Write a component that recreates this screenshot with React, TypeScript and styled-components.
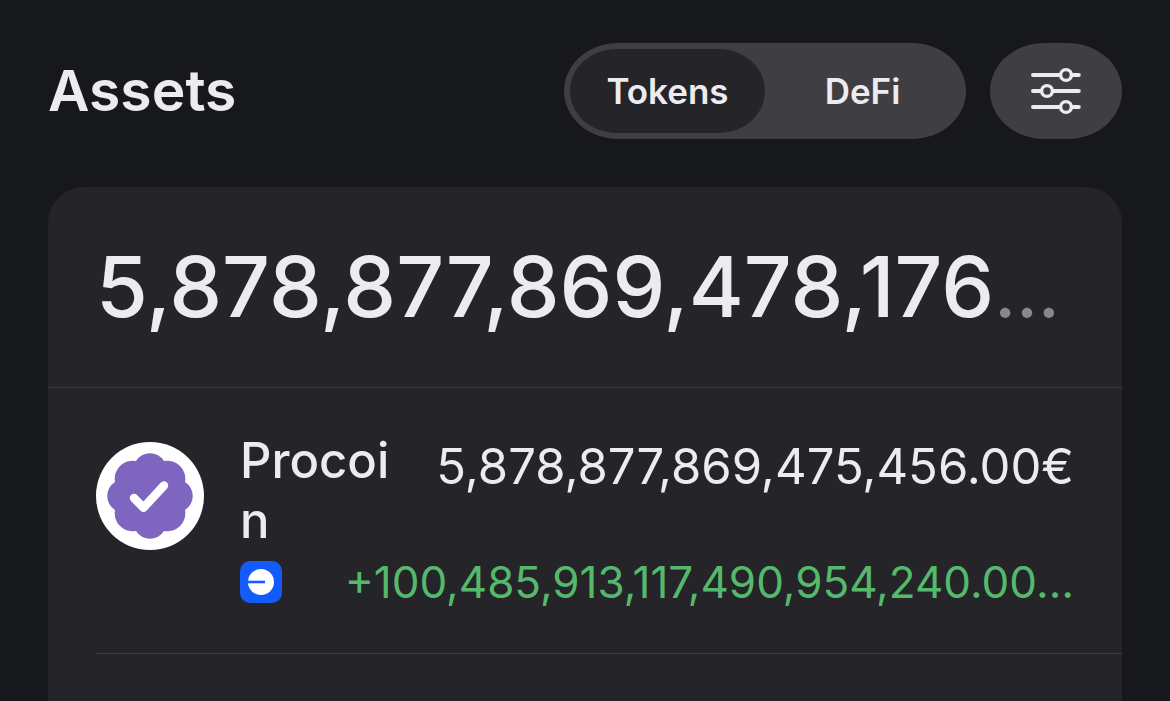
import React, { useState } from "react";
import styled, { createGlobalStyle } from "styled-components";

const color = {
  page: "#17181c",
  card: "#252429",
  control: "#3f3e43",
  line: "#3d3c41",
  text: "#ecebef",
  muted: "#87878c",
  gain: "#55b96c",
  verified: "#7e65c0",
  chain: "#135bfa",
};

const GlobalStyle = createGlobalStyle`
  *, *::before, *::after { box-sizing: border-box; }
  body {
    margin: 0;
    background: ${color.page};
    color: ${color.text};
    font-family: Inter, "Liberation Sans", sans-serif;
  }
  h1, p, ul { margin: 0; padding: 0; }
`;

const Page = styled.main`
  display: flex;
  flex-direction: column;
  gap: 48px;
  min-height: 100vh;
  padding: 43px 48px 0;
`;

const Header = styled.header`
  display: flex;
  align-items: center;
  gap: 24px;
`;

const Title = styled.h1`
  flex: 1;
  font-size: 57px;
  font-weight: 600;
  line-height: 72px;
`;

const Segments = styled.div`
  display: flex;
  padding: 6px;
  border-radius: 54px / 48px;
  background: ${color.control};
`;

const Segment = styled.button<{ $active: boolean }>`
  width: 195px;
  height: 84px;
  padding: 0;
  border: 0;
  border-radius: 46px / 42px;
  background: ${({ $active }) => ($active ? color.card : "transparent")};
  color: inherit;
  font: 600 35px/48px Inter, "Liberation Sans", sans-serif;
  cursor: pointer;
`;

const FilterButton = styled.button`
  display: flex;
  align-items: center;
  justify-content: center;
  width: 132px;
  height: 96px;
  padding: 0;
  border: 0;
  border-radius: 54px / 48px;
  background: ${color.control};
  color: inherit;
  cursor: pointer;
`;

const Card = styled.section`
  flex: 1;
  overflow: hidden;
  border-radius: 36px 36px 0 0;
  background: ${color.card};
`;

const Total = styled.p`
  padding: 50px 48px;
  border-bottom: 1px solid ${color.line};
  font-size: 84px;
  font-weight: 500;
  line-height: 100px;
  white-space: nowrap;
`;

const Rest = styled.span`
  color: ${color.muted};
  font-size: 72px;
  line-height: 72px;
`;

const TokenList = styled.ul`
  list-style: none;
  padding-left: 48px;
`;

const TokenRow = styled.li`
  display: flex;
  align-items: flex-start;
  gap: 36px;
  padding: 43px 48px 44px 0;
  border-bottom: 1px solid ${color.line};
`;

const TokenLogo = styled.svg`
  flex: none;
  width: 108px;
  height: 108px;
  margin-top: 11px;
`;

const TokenBody = styled.div`
  flex: 1;
  min-width: 0;
`;

const TopLine = styled.div`
  display: flex;
  gap: 36px;
  font-size: 49px;
  line-height: 60px;
`;

const Name = styled.p`
  flex: 1;
  min-width: 0;
  font-weight: 500;
  word-break: break-all;
`;

const Value = styled.p`
  padding-top: 6px;
  white-space: nowrap;
`;

const BottomLine = styled.div`
  display: flex;
  align-items: center;
  justify-content: space-between;
  margin-top: 4px;
`;

const Change = styled.p`
  color: ${color.gain};
  font-size: 44px;
  line-height: 54px;
  white-space: nowrap;
`;

const SlidersIcon = () => (
  <svg width="52" height="48" viewBox="0 0 52 48" fill="none" stroke="currentColor" strokeWidth="4.2" strokeLinecap="round" aria-hidden="true">
    <path d="M3.100 8H29.500M42.500 8H48.700M3.100 24H10.500M23.500 24H48.700M3.100 40H29.500M42.500 40H48.700" />
    <circle cx="36" cy="8" r="5.400" strokeWidth="3.400" />
    <circle cx="17" cy="24" r="5.400" strokeWidth="3.400" />
    <circle cx="36" cy="40" r="5.400" strokeWidth="3.400" />
  </svg>
);

const VerifiedLogo = () => (
  <TokenLogo viewBox="0 0 108 108" aria-hidden="true">
    <circle cx="54" cy="54" r="54" fill="#fff" />
    <path
      fill={color.verified}
      d="M40 19A16.500 16.500 0 0 1 68 19A18 18 0 0 1 89 40A16.500 16.500 0 0 1 89 68A18 18 0 0 1 68 89A16.500 16.500 0 0 1 40 89A18 18 0 0 1 19 68A16.500 16.500 0 0 1 19 40A18 18 0 0 1 40 19Z"
    />
    <path d="M38 56L47.500 65.700L68 43.500" fill="none" stroke="#fff" strokeWidth="8.500" strokeLinecap="round" strokeLinejoin="round" />
  </TokenLogo>
);

const ChainBadge = () => (
  <svg width="42" height="42" viewBox="0 0 42 42" role="img" aria-label="Base">
    <rect width="42" height="42" rx="10" fill={color.chain} />
    <circle cx="21" cy="21" r="13" fill="#fff" />
    <path d="M7.500 21H25" stroke={color.chain} strokeWidth="2.600" />
  </svg>
);

const tabs = ["Tokens", "DeFi"];

export default function App() {
  const [active, setActive] = useState("Tokens");
  return (
    <>
      <GlobalStyle />
      <Page>
        <Header>
          <Title>Assets</Title>
          <Segments role="group" aria-label="Asset type">
            {tabs.map((tab) => (
              <Segment key={tab} type="button" $active={tab === active} aria-pressed={tab === active} onClick={() => setActive(tab)}>
                {tab}
              </Segment>
            ))}
          </Segments>
          <FilterButton type="button" aria-label="Filter assets">
            <SlidersIcon />
          </FilterButton>
        </Header>
        <Card>
          <Total>
            5,878,877,869,478,176<Rest>…</Rest>
          </Total>
          <TokenList>
            <TokenRow>
              <VerifiedLogo />
              <TokenBody>
                <TopLine>
                  <Name>Procoin</Name>
                  <Value>5,878,877,869,475,456.00€</Value>
                </TopLine>
                <BottomLine>
                  <ChainBadge />
                  <Change>+100,485,913,117,490,954,240.00…</Change>
                </BottomLine>
              </TokenBody>
            </TokenRow>
          </TokenList>
        </Card>
      </Page>
    </>
  );
}
